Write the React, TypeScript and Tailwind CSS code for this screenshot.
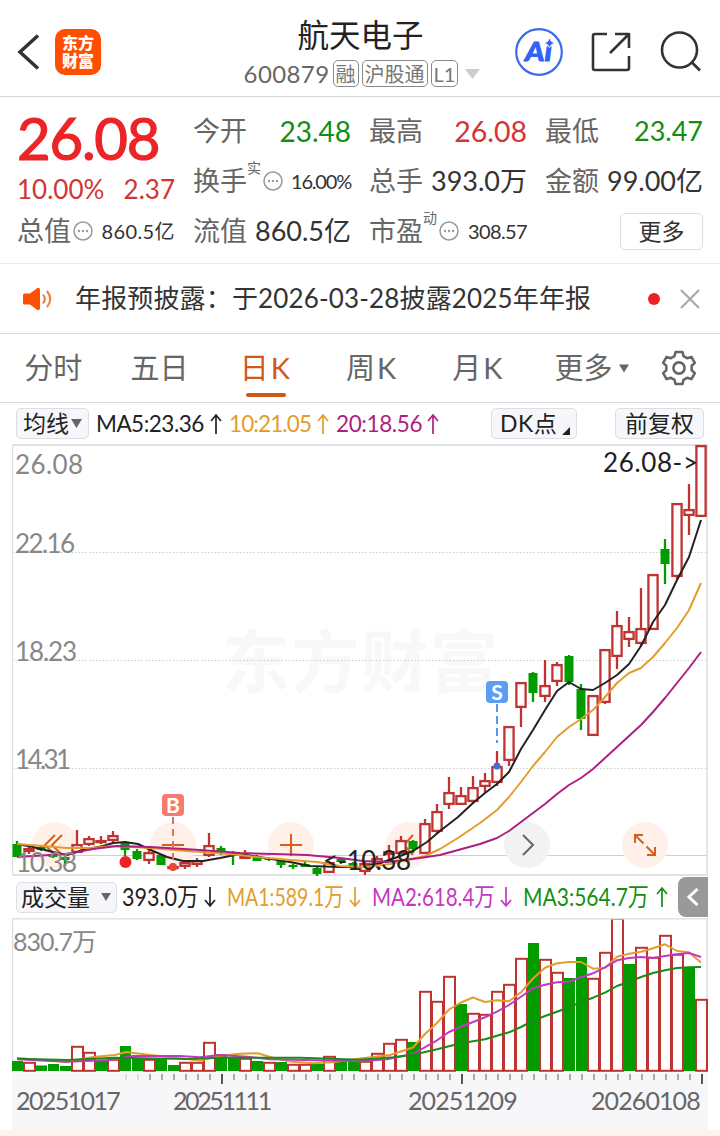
import type { ReactNode } from "react";
import { clsx } from "clsx";

type Candle = [
  up: boolean,
  top: number,
  bottom: number,
  high: number,
  low: number,
  volumeTop: number,
];

type Point = [x: number, y: number];

const START_X = 17;
const STEP = 12;
const RED = "#bf3330";
const GREEN = "#009c00";
const ORANGE = "#e39c2d";
const MAGENTA = "#ad1f80";
const PURPLE = "#c437c4";

const candles: Candle[] = [
  [false, 844, 857, 841, 857, 1061],
  [true, 848, 852, 846, 854, 1062],
  [false, 847, 850, 846, 851, 1065.5],
  [false, 855, 857, 853, 858, 1064],
  [false, 857, 860, 856, 866, 1066],
  [true, 844, 853, 830, 853, 1046],
  [true, 838, 845, 836, 846, 1052],
  [true, 840, 842, 836, 844, 1060],
  [true, 835, 841, 831, 842, 1059],
  [false, 842, 850, 841, 856, 1046],
  [false, 851, 859, 849, 860, 1058],
  [true, 852, 861, 850, 864, 1059],
  [false, 855, 865, 854, 865, 1058],
  [true, 866, 868, 863, 870, 1065],
  [true, 862, 867, 860, 869, 1062],
  [true, 860, 865, 858, 867, 1062],
  [true, 845, 856, 833, 857, 1042],
  [false, 848, 852, 846, 855, 1054],
  [false, 852, 855, 851, 865, 1057],
  [true, 855, 859, 850, 859, 1058],
  [false, 856, 861, 855, 861, 1061],
  [false, 858, 860, 857, 861, 1062],
  [false, 861, 865, 860, 868, 1062],
  [false, 865, 867, 864, 869, 1064],
  [false, 864, 867, 862, 867, 1064],
  [false, 868, 874, 866, 876, 1064],
  [true, 862, 873, 861, 873, 1056],
  [false, 859, 862, 858, 864, 1062],
  [false, 863, 868, 862, 869, 1062],
  [true, 863, 872, 861, 875, 1061],
  [true, 858, 866, 856, 868, 1053],
  [true, 851, 855, 845, 859, 1043],
  [true, 840, 854, 836, 854, 1039],
  [false, 841, 849, 840, 853, 1042],
  [true, 823, 854, 819, 854, 991],
  [true, 811, 832, 804, 834, 1001],
  [true, 792, 805, 777, 809, 976],
  [true, 795, 805, 787, 805, 1004],
  [true, 787, 802, 776, 804, 1013],
  [true, 780, 787, 773, 793, 1014],
  [true, 766, 783, 751, 786, 991],
  [true, 726, 761, 726, 766, 984],
  [true, 682, 708, 682, 727, 958],
  [false, 673, 693, 672, 702, 943],
  [true, 685, 697, 660, 702, 959],
  [true, 664, 682, 662, 686, 972],
  [false, 656, 682, 655, 685, 978],
  [false, 689, 719, 684, 730, 957],
  [true, 695, 736, 695, 736, 978],
  [true, 649, 703, 649, 704, 952],
  [true, 625, 657, 611, 669, 918],
  [true, 631, 640, 617, 647, 964],
  [true, 628, 644, 588, 646, 947],
  [true, 574, 630, 574, 630, 957],
  [false, 549, 564, 539, 584, 935],
  [true, 503, 577, 503, 579, 954],
  [true, 509, 516, 484, 535, 967],
  [true, 445, 517, 445, 517, 999],
];

// Volume bars are coloured by close against previous close
const volumeDown = new Set([
  0, 2, 3, 4, 7, 9, 10, 12, 13, 17, 18, 20, 22, 25, 27, 28, 33, 37, 43, 46, 47,
  51, 56,
]);

const ma5: Point[] = [
  [17, 844], [33, 847], [53, 852], [67, 855], [83, 850], [103, 846], [113, 843],
  [125, 842], [138, 844], [153, 851], [167, 857], [183, 861], [203, 861],
  [220, 858], [240, 854], [265, 858], [290, 862], [310, 866], [340, 867],
  [363, 867], [380, 863], [395, 858], [413, 851], [427, 842], [440, 831],
  [458, 817], [473, 803], [485, 793], [497, 784], [509, 772], [521, 749],
  [533, 730], [545, 710], [557, 691], [569, 682], [581, 689], [593, 690],
  [605, 683], [617, 675], [629, 664], [641, 646], [653, 622], [665, 605],
  [677, 580], [689, 557], [701, 520],
];

const ma10: Point[] = [
  [17, 844], [43, 846], [67, 848], [90, 848], [113, 846], [150, 848],
  [187, 851], [215, 853], [240, 855], [257, 857], [290, 860], [317, 862],
  [340, 866], [363, 867], [390, 864], [407, 860], [425, 856], [440, 849],
  [458, 838], [480, 823], [497, 810], [509, 797], [521, 782], [533, 766],
  [545, 752], [557, 737], [569, 727], [581, 719], [593, 710], [605, 697],
  [617, 683], [629, 673], [641, 668], [653, 657], [665, 643], [677, 628],
  [689, 610], [701, 583],
];

const ma20: Point[] = [
  [17, 857], [67, 854], [93, 849], [117, 846], [150, 847], [200, 850],
  [240, 853], [273, 854], [307, 855], [340, 858], [363, 861], [387, 862],
  [420, 858], [440, 855], [480, 844], [497, 838], [509, 831], [521, 822],
  [533, 813], [545, 804], [557, 794], [569, 785], [581, 778], [593, 769],
  [605, 758], [617, 747], [629, 736], [641, 725], [653, 712], [665, 698],
  [677, 683], [689, 668], [701, 652],
];

const vol5: Point[] = [
  [17, 1058], [67, 1062], [93, 1057], [115, 1055], [126, 1052], [150, 1055],
  [187, 1059], [200, 1060.5], [220, 1056], [240, 1053.7], [258, 1053.3],
  [270, 1057], [290, 1061.5], [313, 1063.3], [333, 1062.3], [360, 1058.5],
  [390, 1055], [413, 1047.5], [425, 1034], [437, 1023], [449, 1009.5],
  [461, 1002.5], [473, 997.5], [485, 1002], [497, 1000.3], [509, 1001.3],
  [521, 992.3], [533, 978.5], [545, 967.7], [557, 963.3], [569, 962],
  [581, 962], [593, 968.7], [605, 967.7], [617, 956.7], [629, 953.7],
  [641, 951.7], [653, 948.3], [665, 944.3], [677, 951], [689, 952.3],
  [701, 962.5],
];

const vol10: Point[] = [
  [17, 1059.3], [67, 1061.7], [110, 1060], [133, 1056], [180, 1056],
  [200, 1057.3], [220, 1055], [247, 1056.7], [270, 1059.3], [360, 1061.3],
  [387, 1059.3], [413, 1054], [437, 1040.3], [449, 1032], [461, 1026.7],
  [473, 1022], [485, 1017.3], [497, 1011.7], [509, 1005], [521, 996.7],
  [533, 988.3], [545, 984.7], [557, 982.3], [569, 981.7], [581, 977.3],
  [593, 973.3], [605, 967.3], [617, 960.3], [629, 958], [641, 957],
  [653, 958], [665, 956], [677, 954.3], [689, 953], [701, 957],
];

const vol20: Point[] = [
  [17, 1058.7], [67, 1060], [115, 1057.7], [187, 1059], [220, 1057.7],
  [300, 1057.7], [360, 1059.7], [393, 1057.3], [413, 1054.7], [437, 1049.3],
  [461, 1043.3], [485, 1039.3], [509, 1032.3], [521, 1027], [533, 1020.7],
  [545, 1016], [557, 1011.7], [569, 1007.3], [581, 1002], [593, 997.7],
  [605, 992.7], [617, 986], [629, 981.7], [641, 977], [653, 973],
  [665, 970.3], [677, 968], [689, 967.3], [701, 967],
];

const tabs = ["分时", "五日", "日K", "周K", "月K"];

function Line({ points, color }: { points: Point[]; color: string }) {
  return (
    <polyline
      points={points.map((p) => p.join(",")).join(" ")}
      fill="none"
      stroke={color}
      strokeWidth="2"
      strokeLinejoin="round"
    />
  );
}

function Dots() {
  return (
    <svg className="ml-[2px] size-5 shrink-0" viewBox="0 0 20 20" fill="none">
      <circle cx="10" cy="10" r="9" stroke="#999" strokeWidth="1.5" />
      <circle cx="6" cy="10" r="1.2" fill="#999" />
      <circle cx="10" cy="10" r="1.2" fill="#999" />
      <circle cx="14" cy="10" r="1.2" fill="#999" />
    </svg>
  );
}

interface StatProps {
  label: string;
  value: string;
  sup?: string;
  dots?: boolean;
  className?: string;
}

function Stat({ label, value, sup, dots, className }: StatProps) {
  return (
    <div className="flex h-[50px] items-center justify-between whitespace-nowrap">
      <div className="flex items-center text-[27px] text-[#666]">
        {label}
        {sup && <sup className="top-[-13px] text-[14px] leading-none">{sup}</sup>}
        {dots && <Dots />}
      </div>
      <span className={className ?? "text-[27px] text-[#333]"}>{value}</span>
    </div>
  );
}

function Tag({ children }: { children: ReactNode }) {
  return (
    <span className="flex h-[27px] items-center rounded-[5px] border-[1.5px] border-[#888] px-[2px] text-[20px] text-[#777]">
      {children}
    </span>
  );
}

function Chip({ className, children }: { className: string; children: ReactNode }) {
  return (
    <div
      className={clsx(
        "flex h-[31px] shrink-0 items-center rounded-[5px] border border-[#dcdee2] bg-[#f6f7fa] text-[23px] whitespace-nowrap text-[#222]",
        className,
      )}
    >
      {children}
    </div>
  );
}

function Arrow({ down, color }: { down?: boolean; color: string }) {
  return (
    <svg
      className={clsx("h-[22px] w-3 shrink-0", down && "rotate-180")}
      viewBox="0 0 12 22"
      fill="none"
      stroke={color}
      strokeWidth="1.700"
    >
      <path d="M6 21V2M1 8l5-6 5 6" />
    </svg>
  );
}

function Header() {
  return (
    <header className="flex h-[97px] items-center border-b border-[#d6d6d6] pt-[7px] pl-[17px]">
      <svg className="h-[38px] w-6" viewBox="0 0 24 38" fill="none" stroke="#333" strokeWidth="3.5">
        <path d="M21 2.5L3 19l18 16.5" />
      </svg>
      <div className="ml-[14px] flex size-[46px] flex-col items-center justify-center rounded-[10px] bg-[#ff4e00] text-[16px] leading-[18px] font-black text-white">
        <span>东方</span>
        <span>财富</span>
      </div>
      <div className="ml-[136px] flex w-[250px] flex-col items-center pt-[5px]">
        <h1 className="mt-[-1px] pr-[3px] text-[31.5px] leading-[40px] text-[#222]">航天电子</h1>
        <div className="flex h-[37px] items-center gap-[3px] whitespace-nowrap">
          <span className="text-[24px] tracking-[0.4px] text-[#666]">600879</span>
          <Tag>融</Tag>
          <Tag>沪股通</Tag>
          <Tag>L1</Tag>
          <svg className="ml-1 h-[10px] w-[15px]" viewBox="0 0 15 10">
            <path d="M0 0h15L7.500 10z" fill="#ccc" />
          </svg>
        </div>
      </div>
      <svg className="mt-[1px] ml-[28px] size-12" viewBox="0 0 48 48">
        <circle cx="24" cy="24" r="22.800" fill="#fff" stroke="#3c69ee" strokeWidth="2.200" />
        <text x="10" y="33" fontSize="27" fontWeight="900" fontStyle="italic" fill="#2f63f6" stroke="#2f63f6" strokeWidth="0.800" textLength="27" lengthAdjust="spacingAndGlyphs">
          Ai
        </text>
        <path d="M34.500 10l1.600 3.400 3.400 1.600-3.400 1.600-1.600 3.400-1.600-3.400-3.400-1.600 3.400-1.600z" fill="#2f63f6" stroke="#fff" strokeWidth="0.600" />
      </svg>
      <svg className="ml-[28px] size-10" viewBox="0 0 40 40" fill="none" stroke="#333" strokeWidth="2.600" strokeLinejoin="round">
        <path d="M16 2H4a2 2 0 0 0-2 2v32a2 2 0 0 0 2 2h32a2 2 0 0 0 2-2V24M24 2h14v14M38 2L19 21" />
      </svg>
      <svg className="ml-[29px] size-[41px]" viewBox="0 0 41 41" fill="none" stroke="#333" strokeWidth="2.600">
        <circle cx="19.500" cy="19" r="17.500" />
        <path d="M32 31.500l8 8" />
      </svg>
    </header>
  );
}

function Quote() {
  return (
    <section className="grid h-[167px] grid-cols-[repeat(4,158px)] content-start gap-x-[18px] border-b border-[#ebebeb] pt-[9px] pl-[17px]">
      <div className="row-span-2 flex h-[100px] flex-col whitespace-nowrap">
        <span className="mt-[2px] text-[58px] leading-[60px] tracking-[-1.2px] text-[#eb2427] [-webkit-text-stroke:1.2px_#eb2427]">
          26.08
        </span>
        <div className="mt-[6px] flex justify-between text-[26px] leading-[30px] text-[#d33434]">
          <span>10.00%</span>
          <span>2.37</span>
        </div>
      </div>
      <Stat label="今开" value="23.48" className="text-[28px] text-[#128f12]" />
      <Stat label="最高" value="26.08" className="text-[28.500px] text-[#d33434]" />
      <Stat label="最低" value="23.47" className="text-[27px] text-[#128f12]" />
      <Stat label="换手" value="16.00%" sup="实" dots className="text-[20px] tracking-[-1.2px] text-[#333]" />
      <Stat label="总手" value="393.0万" />
      <Stat label="金额" value="99.00亿" />
      <Stat label="总值" value="860.5亿" dots className="text-[20px] tracking-[0.4px] text-[#333]" />
      <Stat label="流值" value="860.5亿" />
      <Stat label="市盈" value="308.57" sup="动" dots className="text-[20px] tracking-[-0.6px] text-[#333]" />
      <div className="flex items-center justify-end">
        <button className="h-[37px] w-[83px] rounded-[5px] border border-[#ddd] text-[23px] leading-none text-[#333]">
          更多
        </button>
      </div>
    </section>
  );
}

function Notice() {
  return (
    <section className="flex h-[70px] items-center border-b border-[#d6d6d6] pl-[22px]">
      <svg className="h-6 w-[31px]" viewBox="0 0 31 24" fill="none">
        <path d="M2.500 6.500H8L15 1.200Q18 0 18 3v18q0 3-3 1.800L8 17.500H2.500Q1 17.500 1 16V8q0-1.500 1.500-1.500z" fill="#fd5000" />
        <path d="M21 7.500q3.500 4.500 0 9M25 4q6.500 8 0 16" stroke="#f07a3c" strokeWidth="2" />
      </svg>
      <p className="ml-[22px] w-[573px] text-[26px] tracking-[0.15px] whitespace-nowrap text-[#333]">
        年报预披露：于2026-03-28披露2025年年报
      </p>
      <span className="size-3 rounded-full bg-[#ee2222]" />
      <svg className="ml-5 size-5" viewBox="0 0 20 20" stroke="#aaa" strokeWidth="2.200">
        <path d="M1 1l18 18M19 1L1 19" />
      </svg>
    </section>
  );
}

function Tabs() {
  return (
    <nav className="flex h-[69px] items-stretch border-b border-[#d6d6d6] text-[29px] text-[#666]">
      {tabs.map((tab) => (
        <div
          key={tab}
          className={clsx(
            "relative flex w-[106.3px] items-center justify-center",
            tab.endsWith("K") && "tracking-[2px]",
            tab === "日K" && "text-[#d2571a]",
          )}
        >
          {tab}
          {tab === "日K" && (
            <span className="absolute bottom-[5px] h-1 w-10 rounded-full bg-[#d2571a]" />
          )}
        </div>
      ))}
      <div className="ml-[23px] flex items-center gap-[6px]">
        更多
        <svg className="h-[9px] w-[10px]" viewBox="0 0 11 9">
          <path d="M0 0h11L5.500 9z" fill="#666" />
        </svg>
      </div>
      <svg className="ml-[32px] size-[36px] self-center" viewBox="0 0 36 36" fill="none" stroke="#666" strokeWidth="2.600" strokeLinejoin="round">
        <path d="M14.500 2h7l1 4.200q2 .7 3.600 2l4.300-1.300 3.400 6-3.200 3q.4 2.100 0 4.200l3.200 3-3.400 6-4.300-1.300q-1.600 1.300-3.600 2l-1 4.200h-7l-1-4.200q-2-.7-3.600-2l-4.300 1.300-3.400-6 3.200-3q-.4-2.100 0-4.200l-3.200-3 3.400-6 4.300 1.300q1.600-1.300 3.600-2z" />
        <circle cx="18" cy="18" r="5.600" />
      </svg>
    </nav>
  );
}

function MaRow() {
  return (
    <div className="flex h-[41px] items-center pl-4 text-[22.500px]">
      <Chip className="w-[73px] gap-[2px] pl-[6px]">
        均线
        <svg className="h-[9px] w-[11px]" viewBox="0 0 11 9">
          <path d="M0 0h11L5.500 9z" fill="#666" />
        </svg>
      </Chip>
      <div className="ml-[7px] flex w-[126px] items-center justify-between text-[#222]">
        <span className="w-0 tracking-[-0.5px] whitespace-nowrap">MA5:23.36</span>
        <Arrow color="#222" />
      </div>
      <div className="ml-[7px] flex w-[100px] items-center justify-between text-[#e39c2d]">
        <span className="w-0 tracking-[-0.9px] whitespace-nowrap">10:21.05</span>
        <Arrow color={ORANGE} />
      </div>
      <div className="ml-[7px] flex w-[103px] items-center justify-between text-[#ad1f80]">
        <span className="w-0 tracking-[-0.4px] whitespace-nowrap">20:18.56</span>
        <Arrow color={MAGENTA} />
      </div>
      <Chip className="ml-[52px] w-[86px] pl-2 tracking-[0.5px]">
        DK点
        <svg className="mt-[14px] ml-[5px] size-2" viewBox="0 0 8 8">
          <path d="M8 0v8H0z" fill="#222" />
        </svg>
      </Chip>
      <Chip className="ml-[38px] w-[89px] justify-center">前复权</Chip>
    </div>
  );
}

function PriceChart() {
  return (
    <svg className="ml-3 h-[432px] w-[696px]" viewBox="12 444 696 432">
      <text x="222" y="687" fontSize="68" fontWeight="700" fill="#f8f8f8" textLength="276">
        东方财富
      </text>

      {[552.5, 660.5, 768.5].map((y) => (
        <path key={y} d={`M12 ${y}H708`} stroke="#ccc" strokeDasharray="1.500 2" />
      ))}
      <path d="M12 855.500H708" stroke="#d0d0d0" />
      <path d="M12.500 444V876M707 444V876" stroke="#dedede" strokeWidth="1.500" />
      <path d="M12 445H708M12 875H708" stroke="#e2e2e2" strokeWidth="2" />

      {/* Zoom and pan buttons */}
      {[55, 173, 291, 409, 527, 645].map((x) => (
        <circle key={x} cx={x} cy="845" r="23" fill={x === 527 ? "#f2f2f2" : "#fff0e9"} />
      ))}
      <g fill="none" stroke="#d65f1c" strokeWidth="2">
        <path d="M55 835l-10 10 10 10M62 835l-10 10 10 10M162 845h22M280 845h22M291 834v22M413 835l-9 10 9 10" />
        <path d="M523 835l10 10-10 10" stroke="#666" />
        <path d="M635 843v-8h8M634.500 834.500l9 9M655 847v8h-8M655.500 855.500l-9-9" />
      </g>

      {candles.map(([up, top, bottom, high, low], i) => {
        const x = START_X + STEP * i;
        const color = up ? RED : GREEN;
        const height = bottom - top;
        return (
          <g key={i} stroke={color} strokeWidth="2.300">
            {high < top && <path d={`M${x} ${high}V${top}`} />}
            {low > bottom && <path d={`M${x} ${bottom}V${low}`} />}
            {up ? (
              <rect x={x - 4.600} y={top + 1.100} width="9.200" height={Math.max(height - 2.200, 1)} fill="#fff" />
            ) : (
              <rect x={x - 4.500} y={top} width="9" height={height} fill={color} stroke="none" />
            )}
          </g>
        );
      })}

      <Line points={ma5} color="#222" />
      <Line points={ma10} color={ORANGE} />
      <Line points={ma20} color={MAGENTA} />

      <g fill="#888" fontSize="26">
        <text x="15" y="473.500" textLength="68">26.08</text>
        <text x="15" y="553" textLength="60">22.16</text>
        <text x="15" y="660.500" textLength="62">18.23</text>
        <text x="15" y="768.500" textLength="56">14.31</text>
        <text x="16" y="871.500" textLength="61">10.38</text>
      </g>

      <circle cx="125.500" cy="862" r="6" fill="#ee2222" />
      <circle cx="173" cy="867" r="4" fill="#e5483c" />
      <path d="M173 817v47" stroke="#e2705c" strokeWidth="2" strokeDasharray="7 5" />
      <rect x="162" y="794" width="22" height="22" rx="4" fill="#f8796d" />
      <path d="M497 704v39" stroke="#5598ee" strokeWidth="2" strokeDasharray="8 4" />
      <rect x="486" y="681" width="22" height="22" rx="4" fill="#5b9df5" />
      <circle cx="497" cy="766" r="3.500" fill="#3f6fd0" />
      <g fill="#fff" fontSize="21" fontWeight="700" textAnchor="middle">
        <text x="173" y="812.500">B</text>
        <text x="497" y="699.500">S</text>
      </g>

      <g fill="#222" fontSize="26">
        <text x="603" y="472" textLength="95">26.08-&gt;</text>
        <text x="323" y="870" textLength="88">&lt;-10.38</text>
      </g>
    </svg>
  );
}

interface VolumeMaProps {
  text: string;
  className: string;
  scale: string;
  color: string;
  down?: boolean;
}

function VolumeMa({ text, className, scale, color, down }: VolumeMaProps) {
  return (
    <div className={clsx("flex items-center justify-between", className)}>
      <span className={clsx("w-0 origin-left whitespace-nowrap", scale)}>{text}</span>
      <Arrow color={color} down={down} />
    </div>
  );
}

function VolumeRow() {
  return (
    <div className="flex h-[42px] items-center pl-4 text-[25px]">
      <Chip className="w-[101px] justify-between pr-[5px] pl-[4px]">
        成交量
        <svg className="h-[8px] w-[10px]" viewBox="0 0 11 9">
          <path d="M0 0h11L5.500 9z" fill="#666" />
        </svg>
      </Chip>
      <VolumeMa text="393.0万" scale="scale-x-[0.86]" className="ml-[5px] w-[94px] text-[#222]" color="#222" down />
      <VolumeMa text="MA1:589.1万" scale="scale-x-[0.78]" className="ml-[11px] w-[134px] text-[#e39c2d]" color={ORANGE} down />
      <VolumeMa text="MA2:618.4万" scale="scale-x-[0.82]" className="ml-[11px] w-[140px] text-[#c437c4]" color={PURPLE} down />
      <VolumeMa text="MA3:564.7万" scale="scale-x-[0.84]" className="ml-[11px] w-[145px] text-[#128f12]" color="#128f12" />
      <div className="ml-[10px] flex h-10 w-[30px] items-center justify-center rounded-l-lg bg-[#999]">
        <svg className="h-[18px] w-3" viewBox="0 0 12 18" fill="none" stroke="#fff" strokeWidth="3">
          <path d="M10.500 1L2 9l8.500 8" />
        </svg>
      </div>
    </div>
  );
}

function VolumeChart() {
  return (
    <svg className="ml-3 h-[155px] w-[696px]" viewBox="12 918 696 155">
      <path d="M12.500 918V1072M707 918V1072" stroke="#dedede" strokeWidth="1.500" />
      <text x="13" y="951" fontSize="25" fill="#888" textLength="84">
        830.7万
      </text>
      {candles.map((candle, i) => {
        const x = START_X + STEP * i;
        const top = candle[5];
        return volumeDown.has(i) ? (
          <rect key={i} x={x - 5} y={top} width="11" height={1071 - top} fill={GREEN} />
        ) : (
          <rect key={i} x={x - 5} y={top + 0.8} width="11" height={1070 - top} fill="#fff" stroke={RED} strokeWidth="2" />
        );
      })}
      <path d="M12 918.500H708" stroke="#e2e2e2" strokeWidth="2" />
      <Line points={vol5} color={ORANGE} />
      <Line points={vol10} color={PURPLE} />
      <Line points={vol20} color="#1b8a1b" />
    </svg>
  );
}

function DateAxis() {
  const ticks = Array.from({ length: 49 }, (_, i) => 126 + i * STEP);
  return (
    <div className="mr-3 ml-3 h-[57px] bg-[#f7f7fa]">
      <svg className="block h-3 w-[696px]" viewBox="12 1073 696 12" stroke="#aaa" strokeWidth="2">
        {ticks.map((x) =>
          (x - 222) % 240 === 0 ? (
            <path key={x} d={`M${x} 1074v10`} stroke="#555" />
          ) : (
            <path key={x} d={`M${x} 1074v6`} stroke={x < 145 ? "#ddd" : "#aaa"} />
          ),
        )}
      </svg>
      <div className="flex text-[25px] leading-[30px] whitespace-nowrap text-[#666]">
        <span className="ml-1 w-[157px] tracking-[-1.6px]">20251017</span>
        <span className="w-[235px] tracking-[-2.4px]">20251111</span>
        <span className="w-[183px] tracking-[-0.9px]">20251209</span>
        <span className="tracking-[-0.9px]">20260108</span>
      </div>
    </div>
  );
}

export default function App() {
  return (
    <div className="h-[1136px] w-[720px] overflow-hidden bg-white font-['Lato','Noto_Sans_CJK_SC',sans-serif]">
      <Header />
      <Quote />
      <Notice />
      <Tabs />
      <MaRow />
      <PriceChart />
      <VolumeRow />
      <VolumeChart />
      <DateAxis />
      <div className="h-[6px] bg-[#fff1ec]" />
    </div>
  );
}
